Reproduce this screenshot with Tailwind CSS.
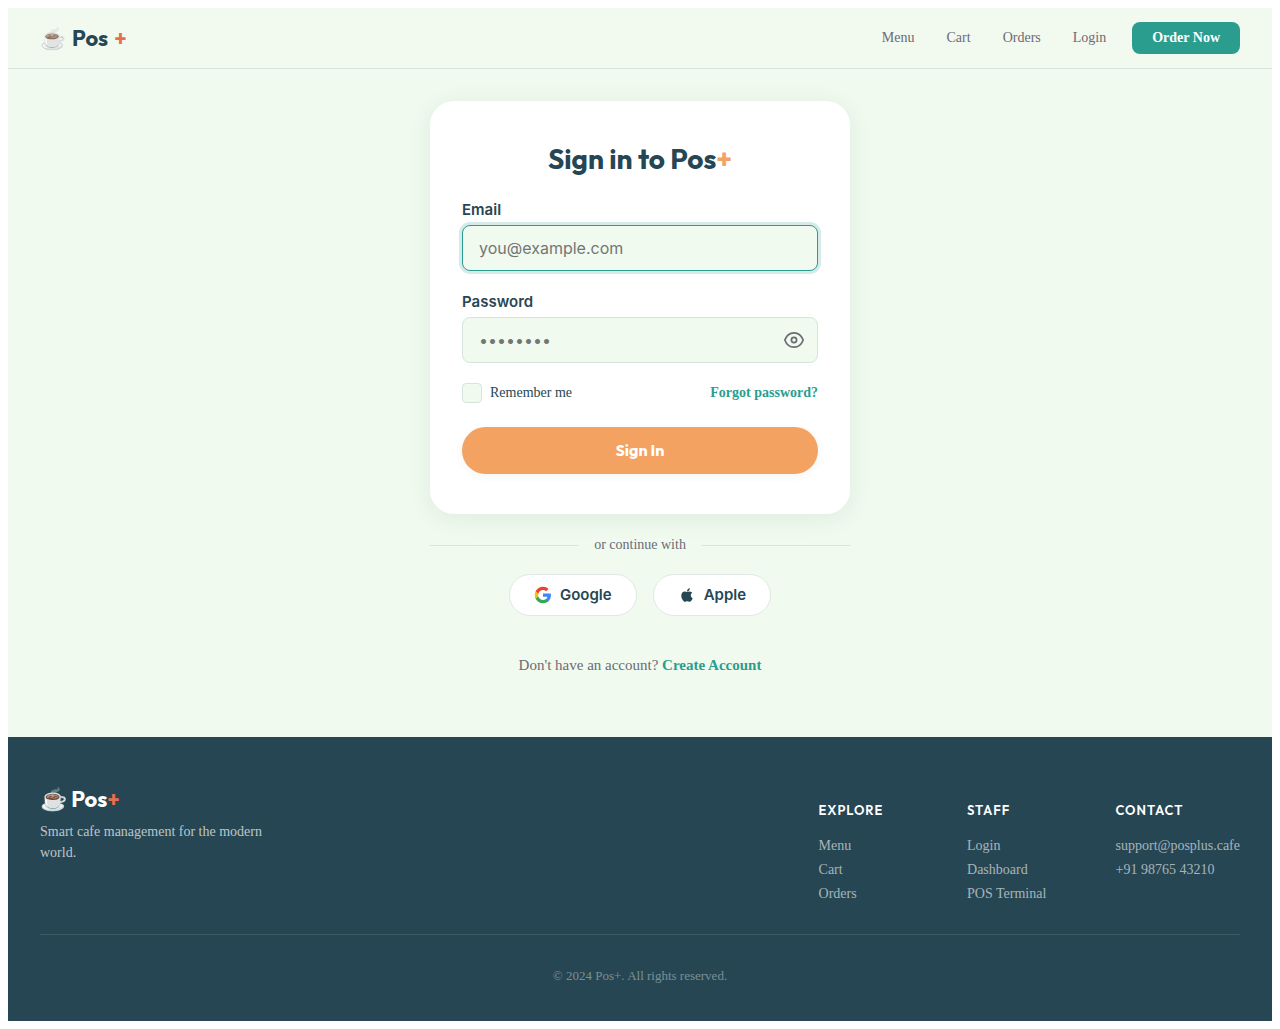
<!DOCTYPE html>
<html lang="en">
<head>
    <meta charset="UTF-8">
    <meta name="viewport" content="width=device-width, initial-scale=1.0">
    <title>Sign in - Pos+</title>
    <script src="https://cdn.jsdelivr.net/npm/@tailwindcss/browser@4"></script>
</head>
<body class="m-2 bg-white font-['Liberation_Serif',serif] text-[#264653]">
    <div class="bg-[#f0faee]">
        <!-- Header -->
        <header class="flex items-center justify-between border-b border-[#d5e5dc] bg-[#f2f9ee] px-8 py-[14px]">
            <a href="#" class="flex items-center gap-[6px] font-['Outfit',Lato,sans-serif] text-[22px] leading-8 font-bold">
                <span class="text-[21px] opacity-80">☕</span>
                <span>Pos</span>
                <span class="text-[#e76f51]">+</span>
            </a>
            <nav class="flex items-center gap-8 text-[14px] leading-8 text-[#6b6b76]">
                <a href="#">Menu</a>
                <a href="#">Cart</a>
                <a href="#">Orders</a>
                <a href="#">Login</a>
                <a href="#" class="-ml-[6px] rounded-lg bg-[#2a9d8f] px-5 font-bold text-white">Order Now</a>
            </nav>
        </header>

        <!-- Sign in -->
        <main class="mx-auto max-w-[420px] pt-8 pb-[63px]">
            <form class="rounded-3xl bg-white px-8 py-10 shadow-[0_4px_24px_rgba(38,70,83,0.08)]">
                <h1 class="mb-6 text-center font-['Outfit',Lato,sans-serif] text-[28px] leading-9 font-bold">Sign in to Pos<span class="text-[#f4a261]">+</span></h1>

                <label for="email" class="mb-[6px] block font-[Inter,sans-serif] text-[15px] leading-[18px] font-semibold">Email</label>
                <input id="email" type="email" placeholder="you@example.com" class="mb-[22px] block h-[46px] w-full rounded-lg border border-[#2a9d8f] bg-[#f0faee] px-4 font-[Inter,sans-serif] text-[16px] shadow-[0_0_0_3px_rgba(42,157,143,0.2)] outline-none placeholder:text-[#757575]">

                <label for="password" class="mb-[6px] block font-[Inter,sans-serif] text-[15px] leading-[18px] font-semibold">Password</label>
                <div class="relative mb-5">
                    <input id="password" type="password" placeholder="••••••••" class="block h-[46px] w-full rounded-lg border border-[#d5e5dc] bg-[#f0faee] pr-12 pl-4 font-[Inter,sans-serif] text-[16px] outline-none placeholder:text-[#757575]">
                    <button type="button" aria-label="Show password" class="absolute inset-y-0 right-[14px] text-[#6b6b76]">
                        <svg class="size-5" viewBox="0 0 20 20" fill="none" stroke="currentColor" stroke-width="1.700">
                            <path d="M.8 10C2.6 5.300 6 2.900 10 2.900s7.400 2.400 9.200 7.100c-1.800 4.700-5.200 7.100-9.200 7.100S2.600 14.700.8 10z" />
                            <circle cx="10" cy="10" r="2.600" />
                        </svg>
                    </button>
                </div>

                <div class="mb-6 flex items-center justify-between text-[14px] leading-5">
                    <label class="flex items-center gap-2">
                        <input type="checkbox" class="size-5 appearance-none rounded border border-[#d5e5dc] bg-[#f0faee]">
                        Remember me
                    </label>
                    <a href="#" class="font-bold text-[#2a9d8f]">Forgot password?</a>
                </div>

                <button type="submit" class="block w-full rounded-full bg-[#f4a261] py-3 font-['Outfit',Lato,sans-serif] text-[16px] leading-[23px] font-bold text-white shadow-[0_2px_8px_rgba(38,70,83,0.06)]">Sign In</button>
            </form>

            <div class="mt-[21px] mb-[19px] flex items-center gap-4 text-[14px] leading-5 text-[#6b6b76]">
                <span class="h-px flex-1 bg-[#d5e5dc]"></span>
                or continue with
                <span class="h-px flex-1 bg-[#d5e5dc]"></span>
            </div>

            <div class="flex justify-center gap-4 font-[Inter,sans-serif] text-[15px] leading-5 font-semibold">
                <button type="button" class="flex h-[42px] items-center gap-2 rounded-full border border-[#e2e8e6] bg-white px-6">
                    <svg class="size-[18px]" viewBox="0 0 24 24">
                        <path fill="#4285F4" d="M22.560 12.250c0-.780-.070-1.530-.200-2.250H12v4.260h5.920c-.260 1.370-1.040 2.530-2.210 3.310v2.770h3.570c2.080-1.920 3.280-4.740 3.280-8.090z" />
                        <path fill="#34A853" d="M12 23c2.970 0 5.460-.980 7.280-2.660l-3.570-2.770c-.980.660-2.230 1.060-3.710 1.060-2.860 0-5.290-1.930-6.160-4.530H2.180v2.840C3.990 20.530 7.700 23 12 23z" />
                        <path fill="#FBBC05" d="M5.840 14.090c-.220-.660-.350-1.360-.350-2.090s.130-1.430.350-2.090V7.070H2.180C1.430 8.550 1 10.220 1 12s.430 3.450 1.180 4.930l3.660-2.840z" />
                        <path fill="#EA4335" d="M12 5.380c1.620 0 3.060.560 4.210 1.640l3.150-3.150C17.450 2.090 14.970 1 12 1 7.700 1 3.990 3.470 2.180 7.070l3.660 2.840c.870-2.600 3.300-4.530 6.160-4.530z" />
                    </svg>
                    Google
                </button>
                <button type="button" class="flex h-[42px] items-center gap-2 rounded-full border border-[#e2e8e6] bg-white px-6">
                    <svg class="size-[18px]" viewBox="0 0 24 24" fill="currentColor">
                        <path d="M17.050 20.280c-.980.950-2.050.800-3.080.350-1.090-.460-2.090-.480-3.240 0-1.440.620-2.200.440-3.060-.350C2.790 15.250 3.510 7.590 9.050 7.310c1.350.070 2.290.740 3.080.800 1.180-.240 2.310-.930 3.570-.840 1.510.120 2.650.720 3.400 1.800-3.120 1.870-2.380 5.980.480 7.130-.570 1.500-1.310 2.990-2.540 4.090zM12.030 7.250c-.150-2.230 1.660-4.070 3.740-4.250.290 2.580-2.340 4.500-3.740 4.250z" />
                    </svg>
                    Apple
                </button>
            </div>

            <p class="mt-10 text-center text-[15px] leading-[18px] text-[#6b6b76]">Don't have an account? <a href="#" class="font-bold text-[#2a9d8f]">Create Account</a></p>
        </main>
    </div>

    <!-- Footer -->
    <footer class="bg-[#264653] px-8 pt-12 pb-9 text-white">
        <div class="flex justify-between pb-7">
            <div class="max-w-[240px]">
                <a href="#" class="block font-['Outfit',Lato,sans-serif] text-[22px] leading-7 font-bold">☕ Pos<span class="text-[#e76f51]">+</span></a>
                <p class="mt-2 text-[14px] leading-[21px] text-white/70">Smart cafe management for the modern world.</p>
            </div>
            <div class="grid grid-cols-3 gap-6 pt-4 text-[14px] leading-6 text-white/60">
                <div>
                    <h2 class="mb-[14px] font-['Outfit',Lato,sans-serif] text-[13px] leading-[19px] font-semibold tracking-[1px] text-white">EXPLORE</h2>
                    <ul>
                        <li><a href="#">Menu</a></li>
                        <li><a href="#">Cart</a></li>
                        <li><a href="#">Orders</a></li>
                    </ul>
                </div>
                <div>
                    <h2 class="mb-[14px] font-['Outfit',Lato,sans-serif] text-[13px] leading-[19px] font-semibold tracking-[1px] text-white">STAFF</h2>
                    <ul>
                        <li><a href="#">Login</a></li>
                        <li><a href="#">Dashboard</a></li>
                        <li><a href="#">POS Terminal</a></li>
                    </ul>
                </div>
                <div>
                    <h2 class="mb-[14px] font-['Outfit',Lato,sans-serif] text-[13px] leading-[19px] font-semibold tracking-[1px] text-white">CONTACT</h2>
                    <ul>
                        <li>support@posplus.cafe</li>
                        <li>+91 98765 43210</li>
                    </ul>
                </div>
            </div>
        </div>
        <p class="border-t border-white/10 pt-8 text-center text-[13px] leading-[18px] text-white/40">© 2024 Pos+. All rights reserved.</p>
    </footer>
</body>
</html>
